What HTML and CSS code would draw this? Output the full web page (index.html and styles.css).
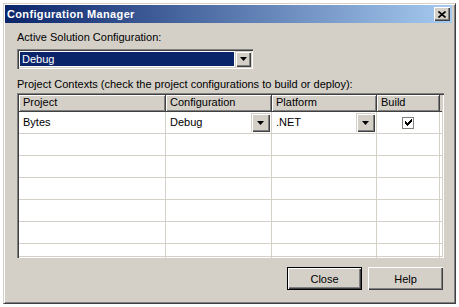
FILE: index.html
```html
<!DOCTYPE html>
<html lang="en">
<head>
  <meta charset="UTF-8">
  <meta name="viewport" content="width=device-width, initial-scale=1.0">
  <title>Configuration Manager</title>
  <link rel="stylesheet" href="styles.css">
</head>
<body>
  <div class="window">
    <!-- Title bar -->
    <div class="title-bar">
      <span class="title-text">Configuration Manager</span>
      <span class="title-close">
        <svg width="8" height="7" viewBox="0 0 8 7">
          <path d="M0.5 0.5 L7.5 6.5 M7.5 0.5 L0.5 6.5" stroke="#000" stroke-width="1.6" fill="none"/>
        </svg>
      </span>
    </div>

    <!-- Dialog body -->
    <div class="dialog-body">
      <div class="field-label">Active Solution Configuration:</div>
      <div class="combo">
        <div class="combo-value">Debug</div>
        <span class="drop-btn">
          <svg width="7" height="4" viewBox="0 0 7 4"><polygon points="0,0 7,0 3.5,4" fill="#000"/></svg>
        </span>
      </div>

      <div class="field-label contexts-label">Project Contexts (check the project configurations to build or deploy):</div>

      <div class="grid">
        <div class="grid-head">
          <div class="head-cell col-project">Project</div>
          <div class="head-cell col-config">Configuration</div>
          <div class="head-cell col-platform">Platform</div>
          <div class="head-cell col-build">Build</div>
          <div class="head-fill"></div>
        </div>

        <div class="grid-row">
          <div class="cell col-project">Bytes</div>
          <div class="cell col-config">
            <span class="cell-text">Debug</span>
            <span class="drop-btn cell-drop">
              <svg width="7" height="4" viewBox="0 0 7 4"><polygon points="0,0 7,0 3.5,4" fill="#000"/></svg>
            </span>
          </div>
          <div class="cell col-platform">
            <span class="cell-text">.NET</span>
            <span class="drop-btn cell-drop">
              <svg width="7" height="4" viewBox="0 0 7 4"><polygon points="0,0 7,0 3.5,4" fill="#000"/></svg>
            </span>
          </div>
          <div class="cell col-build centered">
            <span class="checkbox">
              <svg width="7" height="7" viewBox="0 0 7 7" shape-rendering="crispEdges">
                <path d="M6 0h1v1h-1z M5 1h2v1h-2z M0 2h1v1h-1z M4 2h3v1h-3z M0 3h2v1h-2z M3 3h3v1h-3z M0 4h5v1h-5z M1 5h3v1h-3z M2 6h1v1h-1z" fill="#000"/>
              </svg>
            </span>
          </div>
          <div class="cell cell-fill"></div>
        </div>

        <div class="grid-row">
          <div class="cell col-project"></div>
          <div class="cell col-config"></div>
          <div class="cell col-platform"></div>
          <div class="cell col-build"></div>
          <div class="cell cell-fill"></div>
        </div>
        <div class="grid-row">
          <div class="cell col-project"></div>
          <div class="cell col-config"></div>
          <div class="cell col-platform"></div>
          <div class="cell col-build"></div>
          <div class="cell cell-fill"></div>
        </div>
        <div class="grid-row">
          <div class="cell col-project"></div>
          <div class="cell col-config"></div>
          <div class="cell col-platform"></div>
          <div class="cell col-build"></div>
          <div class="cell cell-fill"></div>
        </div>
        <div class="grid-row">
          <div class="cell col-project"></div>
          <div class="cell col-config"></div>
          <div class="cell col-platform"></div>
          <div class="cell col-build"></div>
          <div class="cell cell-fill"></div>
        </div>
        <div class="grid-row">
          <div class="cell col-project"></div>
          <div class="cell col-config"></div>
          <div class="cell col-platform"></div>
          <div class="cell col-build"></div>
          <div class="cell cell-fill"></div>
        </div>
        <div class="grid-row">
          <div class="cell col-project"></div>
          <div class="cell col-config"></div>
          <div class="cell col-platform"></div>
          <div class="cell col-build"></div>
          <div class="cell cell-fill"></div>
        </div>
      </div>

      <div class="buttons">
        <button class="btn btn-default">Close</button>
        <button class="btn">Help</button>
      </div>
    </div>
  </div>
</body>
</html>
```

FILE: styles.css
```css
/* General Reset */
* {
  margin: 0;
  padding: 0;
  box-sizing: border-box;
}

body {
  font-family: "Liberation Sans", Arial, Helvetica, sans-serif;
  font-size: 11px;
  line-height: 13px;
  color: #000;
  background-color: #fff;
  padding: 3px 0 0 3px;
}

/* Window frame */
.window {
  width: 453px;
  height: 301px;
  background-color: #d4d0c8;
  border: 1px solid;
  border-color: #d4d0c8 #404040 #404040 #d4d0c8;
  box-shadow: inset 1px 1px #fff, inset -1px -1px #808080;
  padding: 1px 3px 1px 1px;
}

/* Title bar */
.title-bar {
  height: 18px;
  display: flex;
  align-items: center;
  padding-left: 2px;
  background: linear-gradient(to right, #0a246a, #a6caf0);
}

.title-text {
  color: #fff;
  font-weight: bold;
  letter-spacing: 0.35px;
}

.title-close {
  margin-left: auto;
  margin-right: 2px;
  width: 16px;
  height: 14px;
  display: flex;
  align-items: center;
  justify-content: center;
  background-color: #d4d0c8;
  box-shadow: inset 1px 1px #fff, inset -1px -1px #404040, inset -2px -2px #808080;
}

/* Dialog body */
.dialog-body {
  padding: 8px 8px 0 12px;
}

.field-label {
  height: 13px;
  white-space: nowrap;
}

.contexts-label {
  margin-top: 9px;
}

/* Combo box */
.combo {
  margin-top: 5px;
  width: 236px;
  height: 20px;
  display: flex;
  padding: 2px;
  background-color: #fff;
  box-shadow: inset 1px 1px #808080, inset 2px 2px #404040, inset -1px -1px #fff, inset -2px -2px #d4d0c8;
}

.combo-value {
  flex: 1;
  margin: 1px;
  padding-left: 2px;
  line-height: 14px;
  color: #fff;
  background-color: #0a246a;
}

.drop-btn {
  width: 16px;
  display: flex;
  align-items: center;
  justify-content: center;
  background-color: #d4d0c8;
  box-shadow: inset 1px 1px #d4d0c8, inset 2px 2px #fff, inset -1px -1px #404040, inset -2px -2px #808080;
}

/* Grid */
.grid {
  margin-top: 2px;
  width: 427px;
  height: 165px;
  padding: 2px;
  overflow: hidden;
  background-color: #fff;
  box-shadow: inset 1px 1px #808080, inset 2px 2px #404040, inset -1px -1px #fff, inset -2px -2px #d4d0c8;
}

.grid-head {
  display: flex;
  height: 17px;
}

.head-cell {
  height: 17px;
  padding-left: 4px;
  line-height: 15px;
  background-color: #d4d0c8;
  border-right: 1px solid #404040;
  border-bottom: 1px solid #404040;
  box-shadow: inset 1px 1px #fff, inset -1px -1px #808080;
  white-space: nowrap;
}

.head-fill {
  flex: 1;
  background-color: #d4d0c8;
  border-bottom: 1px solid #404040;
}

.grid-row {
  display: flex;
  height: 22px;
}

.cell {
  height: 22px;
  display: flex;
  align-items: center;
  padding-left: 4px;
  border-right: 1px solid #d4d0c8;
  border-bottom: 1px solid #d4d0c8;
}

.cell-fill {
  flex: 1;
  border-right: none;
  padding: 0;
}

.col-project { width: 147px; }
.col-config { width: 106px; }
.col-platform { width: 105px; }
.col-build { width: 63px; }

.cell-text {
  flex: 1;
}

.cell-drop {
  width: 19px;
  height: 19px;
  margin-right: 1px;
}

.centered {
  justify-content: center;
  padding-left: 0;
}

.checkbox {
  width: 12px;
  height: 12px;
  display: flex;
  align-items: center;
  justify-content: center;
  background-color: #fff;
  border: 1px solid #808080;
}

/* Buttons */
.buttons {
  margin-top: 9px;
  width: 427px;
  display: flex;
  justify-content: flex-end;
  gap: 6px;
  padding-right: 1px;
}

.btn {
  width: 75px;
  height: 23px;
  font-family: inherit;
  font-size: 11px;
  color: #000;
  background-color: #d4d0c8;
  border: none;
  box-shadow: inset 1px 1px #fff, inset -1px -1px #404040, inset -2px -2px #808080;
}

.btn-default {
  border: 1px solid #000;
}
```
